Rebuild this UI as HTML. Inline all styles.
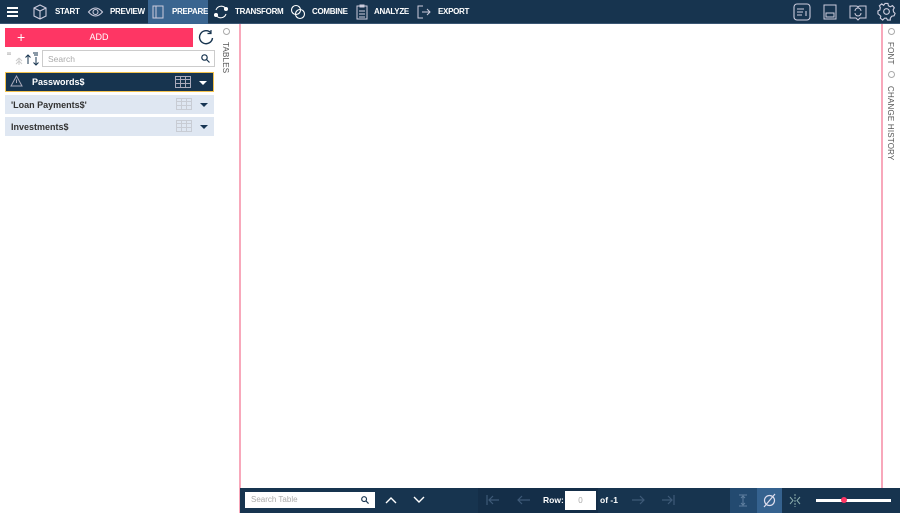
<!DOCTYPE html>
<html><head><style>
*{box-sizing:border-box;margin:0;padding:0}
body{width:900px;height:513px;position:relative;background:#fff;font-family:"Liberation Sans",sans-serif;overflow:hidden}
.top{position:absolute;left:0;top:0;width:900px;height:24px;background:#17344f;border-bottom:1px solid #3a5673}
.t{position:absolute;top:7px;color:#fff;font-size:8px;font-weight:bold;letter-spacing:-0.3px;line-height:10px}
.abs{position:absolute}
.row{position:absolute;left:5px;width:209px;height:19px;background:#dfe7f2;font-size:9px;font-weight:bold;color:#333;display:flex;align-items:center;padding-left:6px}
.grid{position:absolute;right:22px;top:3px;width:16px;height:12px;border:1px solid #c8ccd4;background:repeating-linear-gradient(90deg,transparent 0 4px,#c8ccd4 4px 5px),repeating-linear-gradient(0deg,transparent 0 3px,#c8ccd4 3px 4px)}
.caret{position:absolute;right:6px;top:8px;border-left:4px solid transparent;border-right:4px solid transparent;border-top:4px solid #173553}
.bot{position:absolute;left:240px;top:488px;width:660px;height:25px;background:#17344f}
.vt{position:absolute;writing-mode:vertical-rl;font-size:8px;color:#555;letter-spacing:.2px}
.ar{position:absolute;top:6px}
</style></head><body>
<div class="top">
 <div class="abs" style="left:7px;top:7px;width:11px;height:2px;background:#fff;box-shadow:0 4px 0 #fff,0 8px 0 #fff"></div>
 <svg class="abs" style="left:32px;top:4px" width="16" height="16" viewBox="0 0 16 16" fill="none" stroke="#ccd" stroke-width="1.1"><path d="M8 1L14 4V12L8 15L2 12V4Z M2 4L8 7L14 4 M8 7V15"/></svg><div class="t" style="left:55px">START</div>
 <svg class="abs" style="left:87px;top:6px" width="17" height="12" viewBox="0 0 16 12" fill="none" stroke="#ccd" stroke-width="1.1"><path d="M1 6Q8 -2 15 6Q8 14 1 6Z"/><circle cx="8" cy="6" r="2.5"/></svg><div class="t" style="left:110px">PREVIEW</div>
 <div class="abs" style="left:148px;top:0;width:60px;height:24px;background:#3a6590"></div>
 <svg class="abs" style="left:152px;top:5px" width="12" height="14" viewBox="0 0 12 14" fill="none" stroke="#ccd"><rect x="1" y="1" width="10" height="12"/><path d="M4 1V13"/></svg><div class="t" style="left:172px">PREPARE</div>
 <svg class="abs" style="left:213px;top:4px" width="16" height="16" viewBox="0 0 16 16" fill="none" stroke="#fff" stroke-width="1.1"><path d="M3 6A5.5 5.5 0 0 1 13 5M13 10A5.5 5.5 0 0 1 3 11"/><circle cx="13" cy="5" r="1.5" fill="#fff"/><circle cx="3" cy="11" r="1.5" fill="#fff"/></svg><div class="t" style="left:235px">TRANSFORM</div>
 <svg class="abs" style="left:290px;top:4px" width="16" height="16" viewBox="0 0 16 16" fill="none" stroke="#fff" stroke-width="1.1"><circle cx="6" cy="6" r="4.5"/><circle cx="10" cy="10" r="4.5"/></svg><div class="t" style="left:312px">COMBINE</div>
 <svg class="abs" style="left:356px;top:4px" width="12" height="16" viewBox="0 0 12 16" fill="none" stroke="#ccd"><rect x="1" y="2" width="10" height="13"/><path d="M4 1H8V3H4Z M3 7H9M3 10H9M3 13H9"/></svg><div class="t" style="left:374px">ANALYZE</div>
 <svg class="abs" style="left:417px;top:5px" width="14" height="14" viewBox="0 0 14 14" fill="none" stroke="#ccd"><path d="M6 1H1V13H6 M5 7H13M10 4L13 7L10 10"/></svg><div class="t" style="left:438px">EXPORT</div>
 <svg class="abs" style="left:793px;top:3px" width="18" height="18" viewBox="0 0 18 18" fill="none" stroke="#ccd" stroke-width="1.1"><rect x="1" y="1" width="16" height="16" rx="3"/><path d="M4 6H11M4 9H10M4 12H9M13 8V13"/></svg>
 <svg class="abs" style="left:823px;top:4px" width="14" height="16" viewBox="0 0 14 16" fill="none" stroke="#ccd"><rect x="1" y="1" width="12" height="14"/><rect x="3" y="9" width="8" height="4"/></svg>
 <svg class="abs" style="left:849px;top:3px" width="18" height="18" viewBox="0 0 18 18" fill="none" stroke="#ccd"><path d="M1 3H7Q9 3 9 5Q9 3 11 3H17V15H11L9 17L7 15H1Z"/><path d="M6 8A3 3 0 0 1 12 8M12 10A3 3 0 0 1 6 10"/></svg>
 <svg class="abs" style="left:877px;top:2px" width="19" height="19" viewBox="0 0 20 20" fill="none" stroke="#ccd" stroke-width="1.2"><circle cx="10" cy="10" r="3"/><path d="M8.5 1.5H11.5L12 4L14 5L16.3 3.8L18.2 6L17 8.3L17.5 10.5L19 12L18 14.5L15.5 15L14 17L14 19L11 19L10 17L8 17L6 19L3.5 17L4 15L2.5 13.5L1 12.5V9.5L3 8.5L3.5 6L2.5 4L5 2L7 3.5Z"/></svg>
</div>

<div class="abs" style="left:5px;top:28px;width:188px;height:19px;background:#fe3664;color:#fff;font-size:9px;text-align:center;line-height:19px">ADD</div>
<div class="abs" style="left:17px;top:28px;color:#fff;font-size:14px;line-height:18px;font-weight:300">+</div>
<svg class="abs" style="left:198px;top:29px" width="16" height="16" viewBox="0 0 16 16" fill="none" stroke="#17344f" stroke-width="1.4"><path d="M13 4A6.5 6.5 0 1 0 14.5 9"/><path d="M13 1V4.5H9.5" stroke-width="1.2"/></svg>
<svg class="abs" style="left:5px;top:51px" width="36" height="15" fill="none" stroke-width="1"><path d="M3 1V4M5 1V4M2 2H6M2 3.5H6" stroke="#ccc"/><path d="M14 7L11 10M14 7L17 10M14 10L11 13M14 10L17 13M14 7V14" stroke="#ccc"/><path d="M23 4V13M20.5 6.5L23 4L25.5 6.5" stroke="#17344f"/><path d="M31 6V14M28.5 11.5L31 14L33.5 11.5M28 2H33M29 4H33" stroke="#17344f"/></svg>
<div class="abs" style="left:42px;top:50px;width:173px;height:17px;border:1px solid #ccc;font-size:8.5px;color:#aaa;padding:3px 5px">Search</div>
<svg class="abs" style="left:201px;top:54px" width="9" height="9" viewBox="0 0 9 9" fill="none" stroke="#17344f" stroke-width="1.2"><circle cx="3.5" cy="3.5" r="2.7"/><path d="M5.5 5.5L8.5 8.5"/></svg>
<div class="row" style="top:72px;height:20px;background:#17344f;color:#fff;border:1px solid #f2c24e;padding-left:26px">Passwords$
 <svg class="abs" style="left:4px;top:2px" width="13" height="12" viewBox="0 0 13 12" fill="none" stroke="#aab"><path d="M6.5 1L12 11H1Z M6.5 4.5V8"/></svg>
 <div class="grid" style="border-color:#aab;background:repeating-linear-gradient(90deg,transparent 0 4px,#aab 4px 5px),repeating-linear-gradient(0deg,transparent 0 3px,#aab 3px 4px)"></div><div class="caret" style="border-top-color:#fff"></div></div>
<div class="row" style="top:95px">'Loan Payments$'<div class="grid"></div><div class="caret"></div></div>
<div class="row" style="top:117px">Investments$<div class="grid"></div><div class="caret"></div></div>

<div class="abs" style="left:223px;top:28px;width:7px;height:7px;border:1px solid #aaa;border-radius:50%"></div>
<div class="vt" style="left:221px;top:42px">TABLES</div>
<div class="abs" style="left:239px;top:24px;width:2px;height:489px;background:#f8a8bb"></div>
<div class="abs" style="left:881px;top:24px;width:2px;height:464px;background:#f8a8bb"></div>
<div class="abs" style="left:888px;top:28px;width:7px;height:7px;border:1px solid #aaa;border-radius:50%"></div>
<div class="vt" style="left:886px;top:42px">FONT</div>
<div class="abs" style="left:888px;top:71px;width:7px;height:7px;border:1px solid #aaa;border-radius:50%"></div>
<div class="vt" style="left:886px;top:86px">CHANGE HISTORY</div>

<div class="bot">
 <div class="abs" style="left:5px;top:4px;width:130px;height:16px;background:#fff;font-size:8px;color:#aaa;padding:3px 6px">Search Table</div>
 <svg class="abs" style="left:121px;top:8px" width="8" height="8" viewBox="0 0 9 9" fill="none" stroke="#17344f" stroke-width="1.3"><circle cx="3.5" cy="3.5" r="2.7"/><path d="M5.5 5.5L8.5 8.5"/></svg>
 <svg class="abs" style="left:145px;top:8px" width="12" height="8" fill="none" stroke="#fff" stroke-width="1.4"><path d="M1 7L6 2L11 7"/></svg>
 <svg class="abs" style="left:173px;top:8px" width="12" height="8" fill="none" stroke="#fff" stroke-width="1.4"><path d="M1 1L6 6L11 1"/></svg>
 <div class="abs" style="left:238px;top:0;width:120px;height:25px;background:#142e48"></div>
 <svg class="ar" style="left:246px" width="14" height="12" fill="none" stroke="#3e5a78" stroke-width="1.2"><path d="M1 1V11M3 6H13M7 2L3 6L7 10"/></svg>
 <svg class="ar" style="left:277px" width="14" height="12" fill="none" stroke="#3e5a78" stroke-width="1.2"><path d="M1 6H13M5 2L1 6L5 10"/></svg>
 <div class="abs" style="left:303px;top:7px;color:#fff;font-size:8.5px;font-weight:bold">Row:</div>
 <div class="abs" style="left:325px;top:3px;width:31px;height:19px;background:#fff;color:#aaa;font-size:8px;text-align:center;line-height:19px">0</div>
 <div class="abs" style="left:360px;top:7px;color:#fff;font-size:8.5px;font-weight:bold">of -1</div>
 <svg class="ar" style="left:391px" width="14" height="12" fill="none" stroke="#3e5a78" stroke-width="1.2"><path d="M1 6H13M9 2L13 6L9 10"/></svg>
 <svg class="ar" style="left:421px" width="14" height="12" fill="none" stroke="#3e5a78" stroke-width="1.2"><path d="M13 1V11M1 6H11M7 2L11 6L7 10"/></svg>
 <div class="abs" style="left:490px;top:0;width:27px;height:25px;background:#234a70"></div>
 <svg class="ar" style="left:498px" width="10" height="13" fill="none" stroke="#5f7f9f"><path d="M1 1H9M1 12H9M5 2V11M3 4L5 2L7 4M3 9L5 11L7 9"/></svg>
 <div class="abs" style="left:517px;top:0;width:25px;height:25px;background:#35628f"></div>
 <svg class="abs" style="left:522px;top:5px" width="15" height="15" fill="none" stroke="#dde" stroke-width="1.2"><circle cx="7.5" cy="7.5" r="5"/><path d="M2 14L13 1"/></svg>
 <svg class="ar" style="left:548px" width="14" height="13" fill="none" stroke="#8aa"><path d="M7 0V13" stroke-dasharray="2 1"/><path d="M2 3L5 6.5L2 10M12 3L9 6.5L12 10"/></svg>
 <div class="abs" style="left:576px;top:11px;width:75px;height:3px;background:#fff"></div>
 <div class="abs" style="left:601px;top:9px;width:6px;height:6px;border-radius:50%;background:#fe3664"></div>
</div>
</body></html>
